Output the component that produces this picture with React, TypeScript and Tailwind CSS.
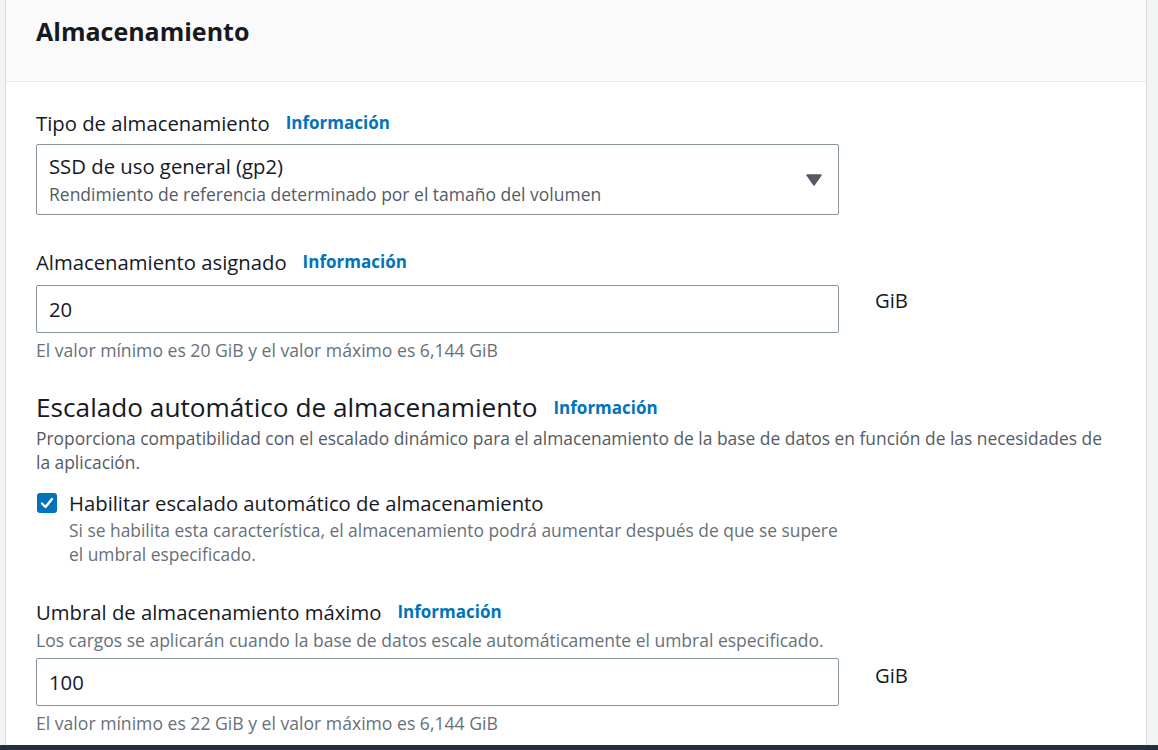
import React from "react";

const Info = () => (
  <span className="ml-[16px] text-[17px] font-bold text-[#0073bb]">Información</span>
);

export default function App() {
  return (
    <div
      className="w-[1158px] h-[750px] bg-[#f2f3f3] flex flex-col overflow-hidden text-[#16191f]"
      style={{ fontFamily: '"Open Sans", "Noto Sans", Arial, sans-serif' }}
    >
      <div className="flex-1 flex pl-[5px] pr-[11px] min-h-0">
        <div className="flex-1 bg-white border-x border-[#d5dbdb] flex flex-col min-h-0">
          <div className="h-[82px] bg-[#fafafa] border-b border-[#eaeded] px-[30px] pt-[14px] shrink-0">
            <h2 className="text-[25px] font-bold leading-[34px] text-[#16191f]">Almacenamiento</h2>
          </div>
          <div className="pl-[30px] pt-[27px]">
            {/* Tipo de almacenamiento */}
            <div className="flex items-center h-[28px] text-[20.3px]">
              <span>Tipo de almacenamiento</span>
              <Info />
            </div>
            <div className="mt-[7px] w-[803px] h-[71px] border border-[#879596] rounded-[2px] flex items-center pl-[12px] pr-[16px]">
              <div className="flex-1 flex flex-col">
                <span className="text-[20.3px] leading-[28px]">SSD de uso general (gp2)</span>
                <span className="text-[17.5px] leading-[28px] text-[#545b64]">Rendimiento de referencia determinado por el tamaño del volumen</span>
              </div>
              <svg width="16" height="12" viewBox="0 0 16 12">
                <path d="M1 1 L15 1 L8 11 Z" fill="#545b64" strokeLinejoin="round" stroke="#545b64" strokeWidth="1.5" />
              </svg>
            </div>

            {/* Almacenamiento asignado */}
            <div className="flex items-center h-[28px] text-[20.3px] mt-[33px]">
              <span>Almacenamiento asignado</span>
              <Info />
            </div>
            <div className="flex mt-[9px]">
              <div className="w-[803px] h-[48px] border border-[#879596] rounded-[2px] flex items-center pl-[12px] text-[20.3px]">20</div>
              <span className="ml-[36px] text-[20.3px] leading-[28px] mt-[1px]">GiB</span>
            </div>
            <div className="text-[17.6px] text-[#687078] leading-[22px] mt-[6px]">El valor mínimo es 20 GiB y el valor máximo es 6,144 GiB</div>

            {/* Escalado */}
            <div className="flex items-center h-[34px] mt-[30px]">
              <span className="text-[26.2px]">Escalado automático de almacenamiento</span>
              <Info />
            </div>
            <div className="text-[17.4px] text-[#545b64] leading-[24px] w-[1080px] mt-[1px]">
              Proporciona compatibilidad con el escalado dinámico para el almacenamiento de la base de datos en función de las necesidades de la aplicación.
            </div>
            <div className="flex mt-[14px]">
              <div className="w-[20px] h-[20px] rounded-[3px] bg-[#0073bb] flex items-center justify-center mt-[5px] ml-[1px] shrink-0">
                <svg width="14" height="12" viewBox="0 0 14 12">
                  <path d="M2 6.5 L5.5 10 L12 2" fill="none" stroke="white" strokeWidth="2.4" strokeLinecap="round" strokeLinejoin="round" />
                </svg>
              </div>
              <div className="ml-[12px] flex flex-col">
                <span className="text-[20.3px] leading-[30px]">Habilitar escalado automático de almacenamiento</span>
                <span className="text-[17.4px] text-[#687078] leading-[24px] w-[780px]">
                  Si se habilita esta característica, el almacenamiento podrá aumentar después de que se supere el umbral especificado.
                </span>
              </div>
            </div>

            {/* Umbral */}
            <div className="flex items-center h-[28px] text-[20.3px] mt-[32px]">
              <span>Umbral de almacenamiento máximo</span>
              <Info />
            </div>
            <div className="text-[17.5px] text-[#687078] leading-[24px] mt-[2px]">Los cargos se aplicarán cuando la base de datos escale automáticamente el umbral especificado.</div>
            <div className="flex mt-[6px]">
              <div className="w-[803px] h-[48px] border border-[#879596] rounded-[2px] flex items-center pl-[12px] text-[20.3px]">100</div>
              <span className="ml-[36px] text-[20.3px] leading-[28px] mt-[3px]">GiB</span>
            </div>
            <div className="text-[17.6px] text-[#687078] leading-[22px] mt-[6px]">El valor mínimo es 22 GiB y el valor máximo es 6,144 GiB</div>
          </div>
        </div>
      </div>
      <div className="h-[5px] bg-[#232f3e] shrink-0" />
    </div>
  );
}
